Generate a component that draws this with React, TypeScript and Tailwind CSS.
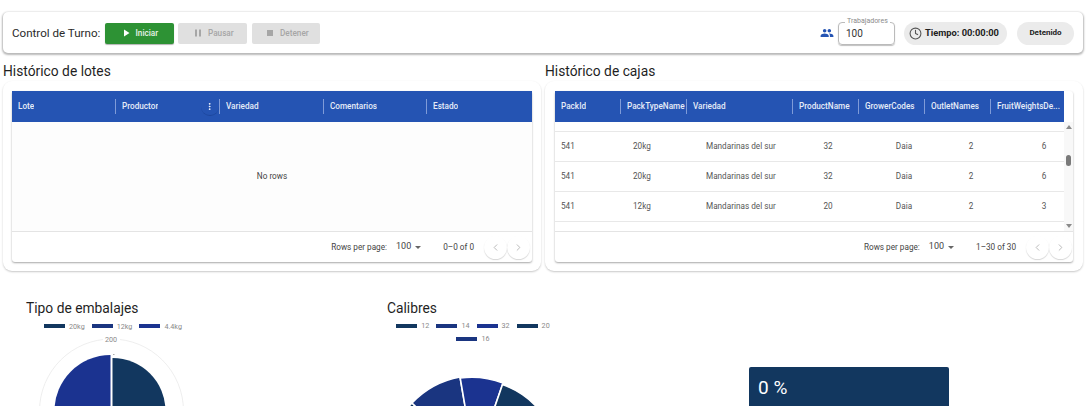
import React from "react";
import { Clock, ChevronLeft, ChevronRight, MoreVertical } from "lucide-react";

const font = { fontFamily: "Roboto, sans-serif" };

function MuiIcon({ d, size, color, className }: { d: string; size: number; color: string; className?: string }) {
  return (
    <svg width={size} height={size} viewBox="0 0 24 24" fill={color} className={className}>
      <path d={d} />
    </svg>
  );
}

function HeaderCell({ label, w, menu, last }: { label: string; w: number; menu?: boolean; last?: boolean }) {
  return (
    <div className="relative flex h-full shrink-0 items-center pl-[6px] pr-[2px]" style={{ width: w }}>
      <span className="truncate text-[8.2px] font-medium text-[#e6ecf8]">{label}</span>
      {menu && (
        <>
          <span className="absolute right-[1px] top-[7px] h-[18px] w-[18px] rounded-full border-b border-[#1d469c]" />
          <MoreVertical className="absolute right-[6px] top-[11px] h-[9px] w-[9px] text-white" strokeWidth={2.5} />
        </>
      )}
      {!last && <div className="absolute right-0 top-[8px] h-[15px] w-[1px] bg-[#7f9bd8]" />}
    </div>
  );
}

function Footer({ range, end }: { range: string; end: string }) {
  return (
    <div className="flex h-[31px] shrink-0 items-center justify-end border-t border-[#e4e4e4] text-[8.2px] text-[#444]">
      <span>Rows per page:</span>
      <span className="ml-[9px] text-[9px]">100</span>
      <span className="ml-[4px] h-0 w-0 border-x-[3.5px] border-t-[3.5px] border-x-transparent border-t-[#666]" />
      <span className="ml-[22px] mr-[10px] whitespace-nowrap">{range}</span>
      <div className="flex" style={{ marginRight: end }}>
        <div className="flex h-[23px] w-[23px] items-center justify-center rounded-full shadow-[0_1px_1px_rgba(0,0,0,0.16)]">
          <ChevronLeft className="h-[11px] w-[11px] text-[#b5b5b5]" />
        </div>
        <div className="flex h-[23px] w-[23px] items-center justify-center rounded-full shadow-[0_1px_1px_rgba(0,0,0,0.16)]">
          <ChevronRight className="h-[11px] w-[11px] text-[#b5b5b5]" />
        </div>
      </div>
    </div>
  );
}

function Row({ cells }: { cells: string[] }) {
  return (
    <div className="flex h-[30px] shrink-0 items-center border-b border-[#e8e8e8] text-[8.2px] text-[#555]">
      <span className="ml-[6px] w-[72px]">{cells[0]}</span>
      <span className="w-[73px]">{cells[1]}</span>
      <span className="w-[100px] whitespace-nowrap">{cells[2]}</span>
      <span className="w-[44px] text-center">{cells[3]}</span>
      <span className="ml-[32px] w-[44px] text-center">{cells[4]}</span>
      <span className="ml-[40px] w-[10px] text-center">{cells[5]}</span>
      <span className="ml-[63px] w-[10px] text-center">{cells[6]}</span>
    </div>
  );
}

function Legend({ items }: { items: { c: string; l: string }[] }) {
  return (
    <>
      {items.map((i) => (
        <span key={i.l} className="flex items-center">
          <span className="h-[4px] w-[21px]" style={{ background: i.c }} />
          <span className="ml-[4px] text-[7.2px] leading-[9px] text-[#8a8a8a]">{i.l}</span>
        </span>
      ))}
    </>
  );
}

export default function App() {
  return (
    <div className="h-[406px] w-[1088px] overflow-hidden bg-white" style={font}>
      <div className="pl-[3px] pr-[5px] pt-[12px]">
        <div className="flex h-[41px] items-center rounded-[5px] bg-white pl-[9px] pr-[9px] pt-[1px] shadow-[0_1px_2px_1px_rgba(0,0,0,0.28)]">
          <span className="pt-[1px] text-[11.6px] text-[#2a2a2a]">Control de Turno:</span>
          <button className="ml-[5px] flex h-[21px] w-[69px] items-center justify-center gap-[4px] rounded-[2px] bg-[#2d9234] pr-[2px] text-[8.2px] font-medium text-[#e8f3e8] shadow-[0_1px_1px_rgba(0,0,0,0.3)]">
            <MuiIcon d="M8 5v14l11-7z" size={12} color="#fff" />
            Iniciar
          </button>
          <button className="ml-[4px] flex h-[21px] w-[69px] items-center justify-center gap-[4px] rounded-[2px] bg-[#e0e0e0] text-[8.2px] font-medium text-[#a6a6a6]">
            <MuiIcon d="M6 19h4V5H6v14zm8-14v14h4V5h-4z" size={12} color="#a6a6a6" />
            Pausar
          </button>
          <button className="ml-[5px] flex h-[21px] w-[68px] items-center justify-center gap-[4px] rounded-[2px] bg-[#e0e0e0] text-[8.2px] font-medium text-[#a6a6a6]">
            <MuiIcon d="M6 6h12v12H6z" size={12} color="#a6a6a6" />
            Detener
          </button>
          <div className="ml-auto flex items-center">
            <MuiIcon
              d="M16 11c1.66 0 2.99-1.34 2.99-3S17.66 5 16 5c-1.66 0-3 1.34-3 3s1.34 3 3 3zm-8 0c1.66 0 2.99-1.34 2.99-3S9.66 5 8 5C6.34 5 5 6.34 5 8s1.34 3 3 3zm0 2c-2.33 0-7 1.17-7 3.5V19h14v-2.5c0-2.33-4.67-3.5-7-3.5zm8 0c-.29 0-.62.02-.97.05 1.16.84 1.97 1.97 1.97 3.45V19h6v-2.5c0-2.33-4.67-3.5-7-3.5z"
              size={14}
              color="#2554b3"
            />
            <div className="relative ml-[4px] flex h-[23px] w-[57px] items-center rounded-[4px] border border-[#bbb] pl-[7px] text-[10px] text-[#333] shadow-[0_1px_1px_rgba(0,0,0,0.25)]">
              100
              <span className="absolute left-[6px] top-[-6px] bg-white px-[2px] text-[7px] leading-[9px] text-[#8a8a8a]">Trabajadores</span>
            </div>
            <div className="ml-[9px] flex h-[23px] w-[103px] items-center rounded-full bg-[#ebebeb] pl-[5px] text-[9.3px] font-bold text-[#222]">
              <Clock className="h-[13px] w-[13px] text-[#555]" />
              <span className="ml-[3px] whitespace-nowrap">Tiempo: 00:00:00</span>
            </div>
            <div className="ml-[10px] flex h-[23px] w-[57px] items-center justify-center rounded-full bg-[#ebebeb] text-[8px] font-bold text-[#222]">Detenido</div>
          </div>
        </div>

        <div className="mt-[9px] grid grid-cols-[538px_538px] gap-[4px]">
          <section>
            <h2 className="text-[13.8px] leading-[18px] text-[#1f1f1f]">Histórico de lotes</h2>
            <div className="mt-[1px] h-[190px] rounded-[9px] bg-white px-[9px] pt-[10px] shadow-[0_1px_2px_rgba(0,0,0,0.22)]">
              <div className="flex h-[171px] flex-col rounded-[3px] shadow-[0_1px_2px_rgba(0,0,0,0.35)]">
                <div className="flex h-[31px] shrink-0 bg-[#2554b3]">
                  <HeaderCell label="Lote" w={104} />
                  <HeaderCell label="Productor" w={104} menu />
                  <HeaderCell label="Variedad" w={104} />
                  <HeaderCell label="Comentarios" w={103} />
                  <HeaderCell label="Estado" w={105} last />
                </div>
                <div className="flex flex-1 items-center justify-center bg-[#fdfdfd] text-[8.2px] text-[#444]">No rows</div>
                <Footer range="0–0 of 0" end="2px" />
              </div>
            </div>
          </section>

          <section>
            <h2 className="text-[13.8px] leading-[18px] text-[#1f1f1f]">Histórico de cajas</h2>
            <div className="mt-[1px] h-[190px] rounded-[9px] bg-white px-[10px] pt-[10px] shadow-[0_1px_2px_rgba(0,0,0,0.22)]">
              <div className="flex h-[171px] flex-col rounded-[3px] shadow-[0_1px_2px_rgba(0,0,0,0.35)]">
                <div className="flex h-[31px] shrink-0 pr-[9px]">
                  <div className="flex h-full w-full bg-[#2554b3]">
                    <HeaderCell label="PackId" w={66} />
                    <HeaderCell label="PackTypeName" w={66} />
                    <HeaderCell label="Variedad" w={106} />
                    <HeaderCell label="ProductName" w={66} />
                    <HeaderCell label="GrowerCodes" w={66} />
                    <HeaderCell label="OutletNames" w={66} />
                    <HeaderCell label="FruitWeightsDe..." w={73} last />
                  </div>
                </div>
                <div className="relative h-[109px] shrink-0 overflow-hidden pr-[9px]">
                  <div className="h-[10px] border-b border-[#e8e8e8]" />
                  <Row cells={["541", "20kg", "Mandarinas del sur", "32", "Daia", "2", "6"]} />
                  <Row cells={["541", "20kg", "Mandarinas del sur", "32", "Daia", "2", "6"]} />
                  <Row cells={["541", "12kg", "Mandarinas del sur", "20", "Daia", "2", "3"]} />
                  <div className="absolute bottom-0 right-0 top-0 w-[9px] bg-[#f8f8f8]">
                    <span className="absolute left-[1.5px] top-[3px] h-0 w-0 border-x-[3px] border-b-[4px] border-x-transparent border-b-[#8a8a8a]" />
                    <span className="absolute left-[2px] top-[33px] h-[11px] w-[5px] rounded-full bg-[#7a7a7a]" />
                    <span className="absolute bottom-[3px] left-[1.5px] h-0 w-0 border-x-[3px] border-t-[4px] border-x-transparent border-t-[#8a8a8a]" />
                  </div>
                </div>
                <Footer range="1–30 of 30" end="1px" />
              </div>
            </div>
          </section>
        </div>

        <div className="mt-[28px] flex">
          <div className="ml-[23px] w-[361px]">
            <h2 className="text-[13.8px] leading-[18px] text-[#1f1f1f]">Tipo de embalajes</h2>
            <div className="ml-[18px] mt-[4px] flex h-[10px] items-center gap-[7px]">
              <Legend items={[{ c: "#12375f", l: "20kg" }, { c: "#1a3580", l: "12kg" }, { c: "#1b3390", l: "4.4kg" }]} />
            </div>
            <svg width="220" height="75" viewBox="0 0 220 75" className="ml-[3px] block">
              <circle cx="82.5" cy="80" r="72" fill="none" stroke="#e6e6e6" strokeWidth="0.7" />
              <rect x="74" y="4" width="17" height="9" fill="#fff" />
              <text x="82" y="11" textAnchor="middle" fontSize="7.2" fill="#8a8a8a">200</text>
              <path d="M81.5 80 V24 A56 56 0 0 0 25.5 80 Z" fill="#1b3390" />
              <path d="M83.5 80 V27 A53 53 0 0 1 136.5 80 Z" fill="#12375f" />
              <rect x="84" y="23" width="1.5" height="0.7" fill="#888" />
            </svg>
          </div>
          <div className="w-[362px]">
            <h2 className="text-[13.8px] leading-[18px] text-[#1f1f1f]">Calibres</h2>
            <div className="mt-[4px] flex w-[172px] flex-wrap justify-center gap-x-[7px] gap-y-[4px]">
              <Legend items={[{ c: "#12375f", l: "12" }, { c: "#1a3580", l: "14" }, { c: "#1b3390", l: "32" }, { c: "#12375f", l: "20" }, { c: "#1a3580", l: "16" }]} />
            </div>
            <svg width="180" height="50" viewBox="0 0 180 50" className="mt-[13px] block">
              <g stroke="#fff" strokeWidth="1.6">
                <path d="M88 108 L25 47 A88 88 0 0 0 0 108 Z" fill="#12375f" />
                <path d="M88 108 L73 21 A88 88 0 0 0 25 47 Z" fill="#1a3580" />
                <path d="M88 108 L73.2 22 A87 87 0 0 1 116 27 Z" fill="#1b3390" />
                <path d="M88 108 L115.5 28.6 A84 84 0 0 1 172 108 Z" fill="#12375f" />
              </g>
            </svg>
          </div>
          <div className="mt-[68px] h-[60px] w-[200px] rounded-[2px] bg-[#12375f] pl-[9px] pt-[9px] text-[19px] leading-[24px] text-white">0 %</div>
        </div>
      </div>
    </div>
  );
}
